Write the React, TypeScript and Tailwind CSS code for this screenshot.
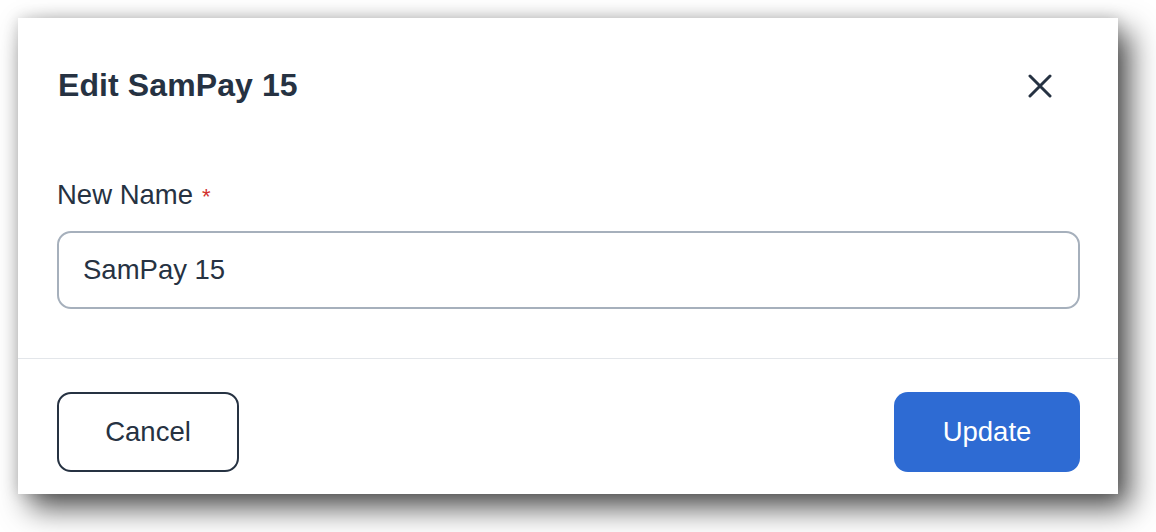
import { useState } from "react";

function CloseIcon() {
  return (
    <svg width="24" height="24" viewBox="0 0 24 24" fill="none" aria-hidden="true">
      <path
        d="M2 2L22 22M22 2L2 22"
        stroke="#263242"
        strokeWidth="3"
        strokeLinecap="round"
      />
    </svg>
  );
}

export default function App() {
  const [name, setName] = useState("SamPay 15");

  return (
    <div className="h-[532px] w-[1156px] bg-white pl-[18px] pt-[18px] font-['Liberation_Sans',Arial,sans-serif] text-[#263242]">
      <div className="flex h-[476px] w-[1100px] flex-col bg-white shadow-[0_0_14px_rgba(0,0,0,0.16),12px_14px_28px_rgba(0,0,0,0.68)]">
        {/* header */}
        <div className="flex items-center justify-between pl-[40px] pr-[66px] pt-[51px]">
          <h2 className="text-[32px] font-bold leading-[32px] tracking-[0.1px]">
            Edit SamPay 15
          </h2>
          <button type="button" className="mt-[1px] flex items-center justify-center">
            <CloseIcon />
          </button>
        </div>

        {/* body */}
        <div className="pl-[39px] pr-[38px] pt-[80px]">
          <label className="block text-[27.5px] leading-[27.5px]">
            New Name
            <span className="ml-[9px] text-[22px] text-[#d2312e]">*</span>
          </label>
          <input
            value={name}
            onChange={(e) => setName(e.target.value)}
            className="mt-[20px] h-[78px] w-full rounded-[14px] border-2 border-[#a6b0bc] pl-[24px] text-[27.5px] text-[#263242] outline-none"
          />
        </div>

        <div className="mt-[49px] h-[2px] w-full bg-[#e3e6ea]" />

        {/* footer */}
        <div className="flex items-center justify-between pb-[22px] pl-[39px] pr-[38px] pt-[33px]">
          <button
            type="button"
            className="h-[80px] w-[182px] rounded-[14px] border-2 border-[#263242] text-[27.5px] text-[#263242]"
          >
            Cancel
          </button>
          <button
            type="button"
            className="h-[80px] w-[186px] rounded-[14px] bg-[#2e6bd3] text-[27.5px] text-white"
          >
            Update
          </button>
        </div>
      </div>
    </div>
  );
}
